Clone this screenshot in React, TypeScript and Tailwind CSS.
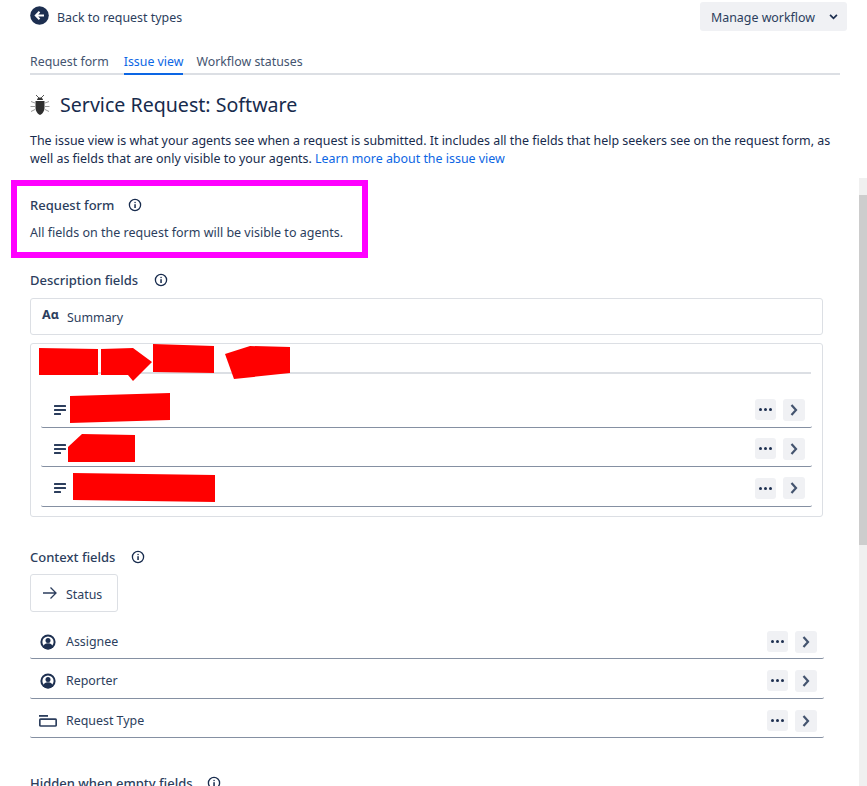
import React from 'react';

const InfoIcon = ({ className }: { className?: string }) => (
  <svg viewBox="0 0 14 14" className={`w-[14px] h-[14px] ${className ?? ''}`} fill="none">
    <circle cx="7" cy="7" r="5.6" stroke="#172b4d" strokeWidth="1.3" />
    <rect x="6.3" y="6.2" width="1.5" height="3.8" fill="#172b4d" />
    <rect x="6.3" y="3.8" width="1.5" height="1.5" rx="0.7" fill="#172b4d" />
  </svg>
);

const LinesIcon = () => (
  <svg viewBox="0 0 12 10" className="w-3 h-[10px] shrink-0" fill="#2c3e5d">
    <rect x="0" y="0" width="12" height="2" rx="0.5" />
    <rect x="0" y="4" width="12" height="2" rx="0.5" />
    <rect x="0" y="8" width="7" height="2" rx="0.5" />
  </svg>
);

const PersonIcon = () => (
  <svg viewBox="0 0 16 16" className="w-4 h-4 shrink-0">
    <circle cx="8" cy="8" r="7.6" fill="#1d2f50" />
    <circle cx="8" cy="8" r="5.6" fill="#fff" />
    <circle cx="8" cy="6.4" r="2.5" fill="#1d2f50" />
    <path d="M3.4 13.2c0-2.800 1.800-4 4.600-4s4.600 1.200 4.600 4c-1 1.200-2.800 2.200-4.600 2.200s-3.600-1-4.600-2.200z" fill="#1d2f50" />
  </svg>
);

const TypeIcon = () => (
  <svg viewBox="0 0 18 12" className="w-[18px] h-3 shrink-0" fill="none">
    <rect x="0" y="0" width="9" height="1.800" fill="#2c3e5d" />
    <rect x="0.800" y="4.200" width="16.400" height="6.800" rx="1" stroke="#2c3e5d" strokeWidth="1.700" />
  </svg>
);

const BugIcon = () => (
  <svg viewBox="0 0 20 22" className="w-5 h-[22px] shrink-0" fill="none">
    <path d="M6 1l3 3M14 1l-3 3" stroke="#444" strokeWidth="0.9" />
    <path d="M7 6c0-1.600 1.300-2.600 3-2.600S13 4.400 13 6z" fill="#333" />
    <path d="M5.500 7h9v7c0 3-2.200 6-4.500 7-2.300-1-4.500-4-4.500-7z" fill="#2f2f2f" />
    <path d="M5 9L1 7.500M5 12.500H0.500M5 15.500l-4 2M15 9l4-1.500M15 12.500h4.500M15 15.500l4 2" stroke="#9a9a9a" strokeWidth="1" />
  </svg>
);

const RowActions = () => (
  <div className="flex items-center gap-[7px]">
    <button className="w-[21px] h-[21px] rounded-[3px] bg-[#f0f1f4] flex items-center justify-center gap-[2px]">
      <span className="w-[3px] h-[3px] rounded-full bg-[#1d2f50]" />
      <span className="w-[3px] h-[3px] rounded-full bg-[#1d2f50]" />
      <span className="w-[3px] h-[3px] rounded-full bg-[#1d2f50]" />
    </button>
    <button className="w-[22px] h-[22px] rounded-[3px] bg-[#f0f1f4] flex items-center justify-center">
      <svg viewBox="0 0 8 12" className="w-2 h-3" fill="none">
        <path d="M1.500 1l4.500 5-4.500 5" stroke="#44546f" strokeWidth="2.200" />
      </svg>
    </button>
  </div>
);

const Heading = ({ label, gap }: { label: string; gap: string }) => (
  <div className={`flex items-center ${gap} text-[13px] leading-[18px] font-medium text-[#2c3e5d]`}>
    <span>{label}</span>
    <InfoIcon />
  </div>
);

const contextRows = [
  { label: 'Assignee', icon: <PersonIcon />, h: 'h-[40px] pt-[6px]', gap: 'gap-[10px] pl-[10px]' },
  { label: 'Reporter', icon: <PersonIcon />, h: 'h-[40px] pt-[4px]', gap: 'gap-[10px] pl-[10px]' },
  { label: 'Request Type', icon: <TypeIcon />, h: 'h-[39px] pt-[5px]', gap: 'gap-[9px] pl-[9px]' },
];

export default function App() {
  return (
    <div className="w-[867px] h-[786px] overflow-hidden bg-white flex flex-col text-[#172b4d] text-[13px] leading-[18px] font-['Noto_Sans',sans-serif]">
      <div className="pl-[30px] pr-[20px] pt-[2px]">
        <div className="flex items-center justify-between h-[29px]">
          <div className="flex items-center gap-[8px] text-[12.400px] text-[#2c3e5d]">
            <svg viewBox="0 0 19 19" className="w-[19px] h-[19px] -mt-[2px]">
              <circle cx="9.500" cy="9.500" r="9.300" fill="#1d2f50" />
              <path d="M14 9.500H6M9.500 5.800L5.800 9.500l3.700 3.700" stroke="#fff" strokeWidth="2" fill="none" />
            </svg>
            <span className="pt-[2px]">Back to request types</span>
          </div>
          <button className="w-[147px] h-[29px] rounded-[3px] bg-[#f0f1f4] flex items-center pl-[11px] gap-[14px] text-[12.400px] text-[#2c3e5d]">
            <span className="pt-[2px]">Manage workflow</span>
            <svg viewBox="0 0 10 7" className="w-[9px] h-[6px]" fill="none">
              <path d="M1 1l4 4 4-4" stroke="#1d2f50" strokeWidth="2" />
            </svg>
          </button>
        </div>

        <div className="mt-[20px] w-[810px] h-[24px] border-b-2 border-[#dcdfe4] flex gap-[15px] text-[#44546f] text-[12.350px]">
          <span className="h-[24px] pt-[2px]">Request form</span>
          <span className="h-[24px] pt-[2px] text-[#0c66e4] border-b-2 border-[#0c66e4]">Issue view</span>
          <span className="-ml-[2px] h-[24px] pt-[2px]">Workflow statuses</span>
        </div>

        <div className="mt-[17px] flex items-center gap-[10px] h-[26px]">
          <BugIcon />
          <h1 className="text-[19.600px] leading-[26px] text-[#172b4d]">Service Request: Software</h1>
        </div>

        <p className="mt-[14px] w-[812px] text-[12.430px] leading-[18px] text-[#172b4d]">
          The issue view is what your agents see when a request is submitted. It includes all the fields that help seekers see on the request form, as well as fields that are only visible to your agents. <span className="text-[#0c66e4]">Learn more about the issue view</span>
        </p>
      </div>

      <div className="mt-[10px] flex flex-1 min-h-0">
        <div className="flex-1 min-w-0">
          <div className="ml-[11px] mt-[2px] w-[357px] h-[78px] border-[6px] border-[#ff00ff] pl-[13px] pt-[10px]">
            <Heading label="Request form" gap="gap-[14px]" />
            <p className="mt-[10px] text-[12.500px] text-[#2c3e5d]">All fields on the request form will be visible to agents.</p>
          </div>

          <div className="pl-[30px] w-[824px]">
            <div className="mt-[13px]">
              <Heading label="Description fields" gap="gap-[16px]" />
            </div>
            <div className="mt-[9px] mr-[1px] h-[37px] border border-[#dcdfe4] rounded-[3px] flex items-center pl-[11px] gap-[9px]">
              <span className="w-[16px] text-[12.500px] font-bold text-[#2c3e5d] leading-none -mt-[2px]">Aɑ</span>
              <span className="text-[12.400px] pt-[3px] text-[#2c3e5d]">Summary</span>
            </div>

            <div className="relative mt-[8px] mr-[1px] h-[174px] border border-[#dcdfe4] rounded-[3px] pl-[10px] pr-[10px]">
              <div className="mt-[28px] h-[2px] bg-[#dcdfe4] mr-[1px]" />
              <div className="mt-[15px] flex flex-col">
                {[0, 1, 2].map((i) => (
                  <div key={i} className={`${i === 2 ? 'h-[40px]' : 'h-[39px]'} border-b border-[#8590a2] flex items-center justify-between pl-[13px] pr-[7px] pt-[3px] rounded-b-[2px]`}>
                    <LinesIcon />
                    <RowActions />
                  </div>
                ))}
              </div>
              <svg className="absolute left-[-1px] top-[-1px] w-[793px] h-[174px]" viewBox="0 0 793 174" fill="#ff0000">
                <polygon points="9,5 68,6 68,32 9,32" />
                <polygon points="71,6 103,5 122,19 103,38 98,32 71,32" />
                <polygon points="123,1 184,3 184,30 123,29" />
                <polygon points="195,11 220,3 260,4 260,30 204,36" />
                <polygon points="40,53 140,50 140,77 40,80" />
                <polygon points="38,104 52,91 105,92 105,119 38,119" />
                <polygon points="43,130 185,132 185,159 43,157" />
              </svg>
            </div>

            <div className="mt-[31px]">
              <Heading label="Context fields" gap="gap-[16px]" />
            </div>
            <div className="mt-[8px] w-[88px] h-[38px] border border-[#dcdfe4] rounded-[3px] flex items-center pl-[11px] gap-[8px]">
              <svg viewBox="0 0 16 14" className="w-4 h-[14px] shrink-0" fill="none">
                <path d="M1 7h13M8.500 1.500L14 7l-5.500 5.500" stroke="#2c3e5d" strokeWidth="1.300" />
              </svg>
              <span className="text-[12.400px] pt-[3px] text-[#2c3e5d]">Status</span>
            </div>

            <div className="mt-[7px] flex flex-col">
              {contextRows.map((row) => (
                <div key={row.label} className={`${row.h} border-b border-[#8590a2] flex items-center justify-between pr-[7px] rounded-b-[2px]`}>
                  <div className={`flex items-center ${row.gap} text-[12.400px] text-[#2c3e5d]`}>
                    {row.icon}
                    <span>{row.label}</span>
                  </div>
                  <RowActions />
                </div>
              ))}
            </div>

            <div className="mt-[36px]">
              <Heading label="Hidden when empty fields" gap="gap-[14px]" />
            </div>
          </div>
        </div>

        <div className="w-[8px] shrink-0 bg-[#f0f0f0] flex flex-col">
          <div className="h-[17px]" />
          <div className="h-[350px] bg-[#cdcdcd]" />
        </div>
      </div>
    </div>
  );
}
